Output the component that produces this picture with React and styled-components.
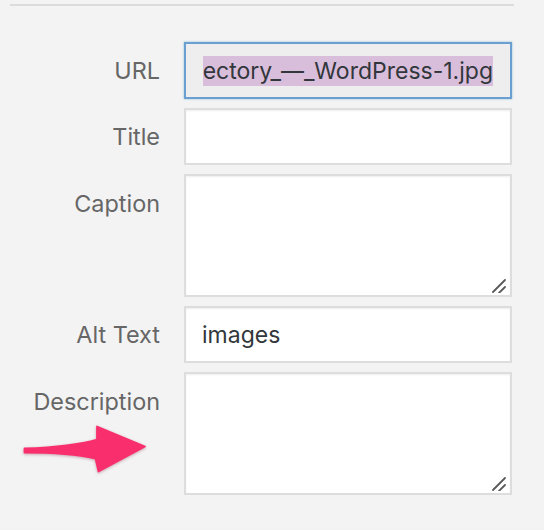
import React from "react";
import styled, { createGlobalStyle } from "styled-components";

const Global = createGlobalStyle`
  html, body {
    margin: 0;
    padding: 0;
    background: #f3f3f3;
  }
  body {
    font-family: Inter, "Noto Sans", "Liberation Sans", sans-serif;
  }
`;

const Page = styled.div`
  position: relative;
  width: 544px;
  height: 530px;
  padding-top: 4px;
  box-sizing: border-box;
  overflow: hidden;
`;

const Divider = styled.div`
  margin-left: 10px;
  width: 504px;
  height: 2px;
  background: #dcdcdc;
`;

const Form = styled.div`
  display: grid;
  grid-template-columns: 160px 328px;
  column-gap: 24px;
  row-gap: 9px;
  margin-top: 36px;
`;

const Label = styled.label`
  text-align: right;
  font-size: 23.4px;
  line-height: 28px;
  padding-top: ${(p) => (p.$multi ? 16 : 15)}px;
  color: #666;
`;

const Box = styled.div`
  position: relative;
  box-sizing: border-box;
  height: ${(p) => (p.$multi ? 123 : 57)}px;
  border: 2px solid ${(p) => (p.$focus ? "#6a9fd0" : "#dddddd")};
  background: ${(p) => (p.$focus ? "#eeeeee" : "#ffffff")};
  box-shadow: ${(p) =>
    p.$focus ? "0 0 2px rgba(30,140,190,0.5)" : "inset 0 1px 2px rgba(0,0,0,0.07)"};
  padding: 0 17px 0 16px;
  display: flex;
  align-items: center;
  justify-content: ${(p) => (p.$focus ? "flex-end" : "flex-start")};
  font-size: 23px;
  color: #32373c;
`;

const Selected = styled.span`
  white-space: nowrap;
  line-height: 30px;
  background: #d9bedb;
  color: #32373c;
`;

const Value = styled.span`
  white-space: nowrap;
  line-height: 30px;
`;

const Resizer = styled.svg`
  position: absolute;
  right: 4px;
  bottom: 2px;
  width: 16px;
  height: 16px;
`;

const Arrow = styled.svg`
  position: absolute;
  left: 20px;
  top: 420px;
  width: 132px;
  height: 60px;
  overflow: visible;
  filter: drop-shadow(0 1px 1.5px rgba(120, 20, 50, 0.35));
`;

function Handle() {
  return (
    <Resizer viewBox="0 0 16 16">
      <path d="M3 15 L15 3 M9 16 L15 10" stroke="#5a5a5a" strokeWidth="1.8" strokeLinecap="round" />
    </Resizer>
  );
}

function Row({ label, multi, focus, children }) {
  return (
    <>
      <Label $multi={multi}>{label}</Label>
      <Box $multi={multi} $focus={focus}>
        {children}
        {multi && <Handle />}
      </Box>
    </>
  );
}

export default function App() {
  return (
    <Page>
      <Global />
      <Divider />
      <Form>
        <Row label="URL" focus>
          <Selected>ectory_—_WordPress-1.jpg</Selected>
        </Row>
        <Row label="Title" />
        <Row label="Caption" multi />
        <Row label="Alt Text">
          <Value>images</Value>
        </Row>
        <Row label="Description" multi />
      </Form>
      <Arrow viewBox="0 0 132 60">
        <path
          d="M4.5 28.5 C 30 27.5, 58 25, 77 19.5 L 77 6.5 L 125 26.5 L 78.5 51.5 L 75.5 38.5 C 58 34.5, 30 32.5, 4.5 32.5 Z"
          fill="#f92f6d"
          stroke="#f92f6d"
          strokeWidth="1.8"
          strokeLinejoin="round"
        />
      </Arrow>
    </Page>
  );
}
